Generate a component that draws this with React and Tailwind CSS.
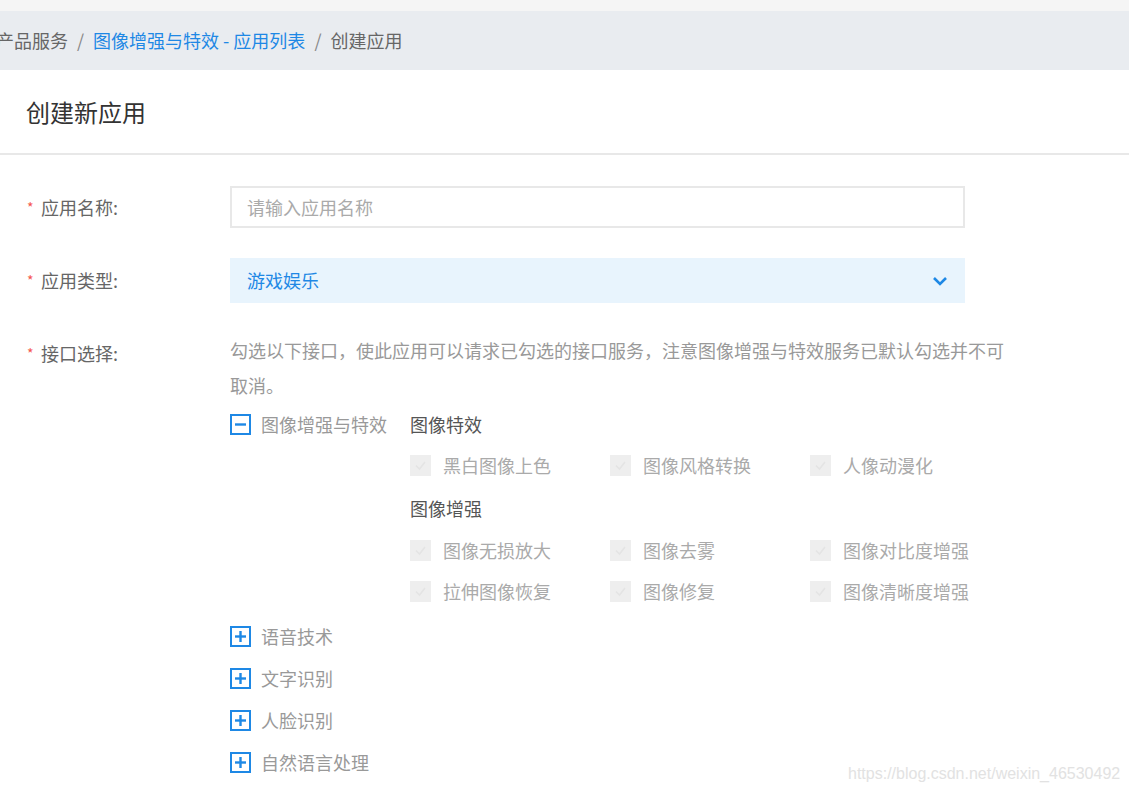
import React from "react";

const CJK = { fontFamily: '"Microsoft YaHei", "Noto Sans CJK SC", "Noto Sans", sans-serif' };

function Check({ label }) {
  return (
    <div className="flex items-center w-[200px]">
      <span className="w-[21px] h-[21px] bg-[#eeeeee] flex items-center justify-center shrink-0">
        <svg width="13" height="11" viewBox="0 0 13 11">
          <polyline points="2,5.5 5.5,9 11,2" fill="none" stroke="#e4e4e4" strokeWidth="1.6" />
        </svg>
      </span>
      <span className="ml-[12px] text-[#aaaaaa]">{label}</span>
    </div>
  );
}

function BoxIcon({ plus }) {
  return (
    <span className="w-[21px] h-[21px] border-2 border-[#1e88e5] bg-white flex items-center justify-center shrink-0">
      <svg width="17" height="17" viewBox="0 0 17 17">
        <line x1="3" y1="8.5" x2="14" y2="8.5" stroke="#1e88e5" strokeWidth="2.4" />
        {plus && <line x1="8.5" y1="3" x2="8.5" y2="14" stroke="#1e88e5" strokeWidth="2.4" />}
      </svg>
    </span>
  );
}

export default function App() {
  return (
    <div className="relative min-h-screen bg-white text-[18px] overflow-hidden" style={CJK}>
      <div className="h-[11px] bg-[#f5f5f5]" />
      <div className="h-[59px] bg-[#e9ecf0] flex items-center -ml-[4px] text-[#666666] whitespace-nowrap">
        <span>产品服务</span>
        <span className="mx-[9px] text-[#888]">/</span>
        <span className="text-[#1e88e5]">图像增强与特效 - 应用列表</span>
        <span className="mx-[9px] text-[#888]">/</span>
        <span>创建应用</span>
      </div>
      <div className="h-[85px] flex items-center pl-[26px] border-b-2 border-[#e8e8e8]">
        <span className="text-[24px] text-[#333333]">创建新应用</span>
      </div>

      <div className="pl-[27px] pt-[31px]">
        <div className="flex items-center h-[42px]">
          <div className="w-[203px] flex items-center text-[#666666]">
            <span className="text-[#f5564e] text-[14px] w-[14px]">*</span>
            <span>应用名称:</span>
          </div>
          <div className="w-[735px] h-[42px] border-2 border-[#e8e8e8] flex items-center pl-[15px] text-[#aaaaaa]">
            请输入应用名称
          </div>
        </div>

        <div className="flex items-center h-[45px] mt-[30px]">
          <div className="w-[203px] flex items-center text-[#666666]">
            <span className="text-[#f5564e] text-[14px] w-[14px]">*</span>
            <span>应用类型:</span>
          </div>
          <div className="w-[735px] h-[45px] bg-[#e8f4fd] flex items-center justify-between pl-[17px] pr-[17px] text-[#1e88e5]">
            <span>游戏娱乐</span>
            <svg width="16" height="10" viewBox="0 0 16 10">
              <polyline points="2,2 8,8 14,2" fill="none" stroke="#1e88e5" strokeWidth="2.6" />
            </svg>
          </div>
        </div>

        <div className="flex mt-[30px]">
          <div className="w-[203px] flex items-center h-[40px] text-[#666666]">
            <span className="text-[#f5564e] text-[14px] w-[14px]">*</span>
            <span>接口选择:</span>
          </div>
          <div>
            <div className="w-[780px] leading-[35px] text-[#999999]">
              勾选以下接口，使此应用可以请求已勾选的接口服务，注意图像增强与特效服务已默认勾选并不可取消。
            </div>
            <div className="flex">
              <div className="w-[180px] h-[42px] flex items-center">
                <BoxIcon />
                <span className="ml-[10px] text-[#999999]">图像增强与特效</span>
              </div>
              <div>
                <div className="h-[42px] flex items-center text-[#555555]">图像特效</div>
                <div className="h-[40px] flex items-center">
                  <Check label="黑白图像上色" />
                  <Check label="图像风格转换" />
                  <Check label="人像动漫化" />
                </div>
                <div className="h-[46px] flex items-center text-[#555555]">图像增强</div>
                <div className="h-[38px] flex items-center">
                  <Check label="图像无损放大" />
                  <Check label="图像去雾" />
                  <Check label="图像对比度增强" />
                </div>
                <div className="h-[44px] flex items-center">
                  <Check label="拉伸图像恢复" />
                  <Check label="图像修复" />
                  <Check label="图像清晰度增强" />
                </div>
              </div>
            </div>
            <div className="mt-[2px]">
              {["语音技术", "文字识别", "人脸识别", "自然语言处理"].map((t) => (
                <div key={t} className="h-[42px] flex items-center">
                  <BoxIcon plus />
                  <span className="ml-[10px] text-[#999999]">{t}</span>
                </div>
              ))}
            </div>
          </div>
        </div>
      </div>

      <div
        className="absolute left-[848px] top-[762px] text-[16px] text-[#e2e2e2] whitespace-nowrap"
        style={{ fontFamily: '"Liberation Sans", Arial, sans-serif' }}
      >
        https://blog.csdn.net/weixin_46530492
      </div>
    </div>
  );
}
